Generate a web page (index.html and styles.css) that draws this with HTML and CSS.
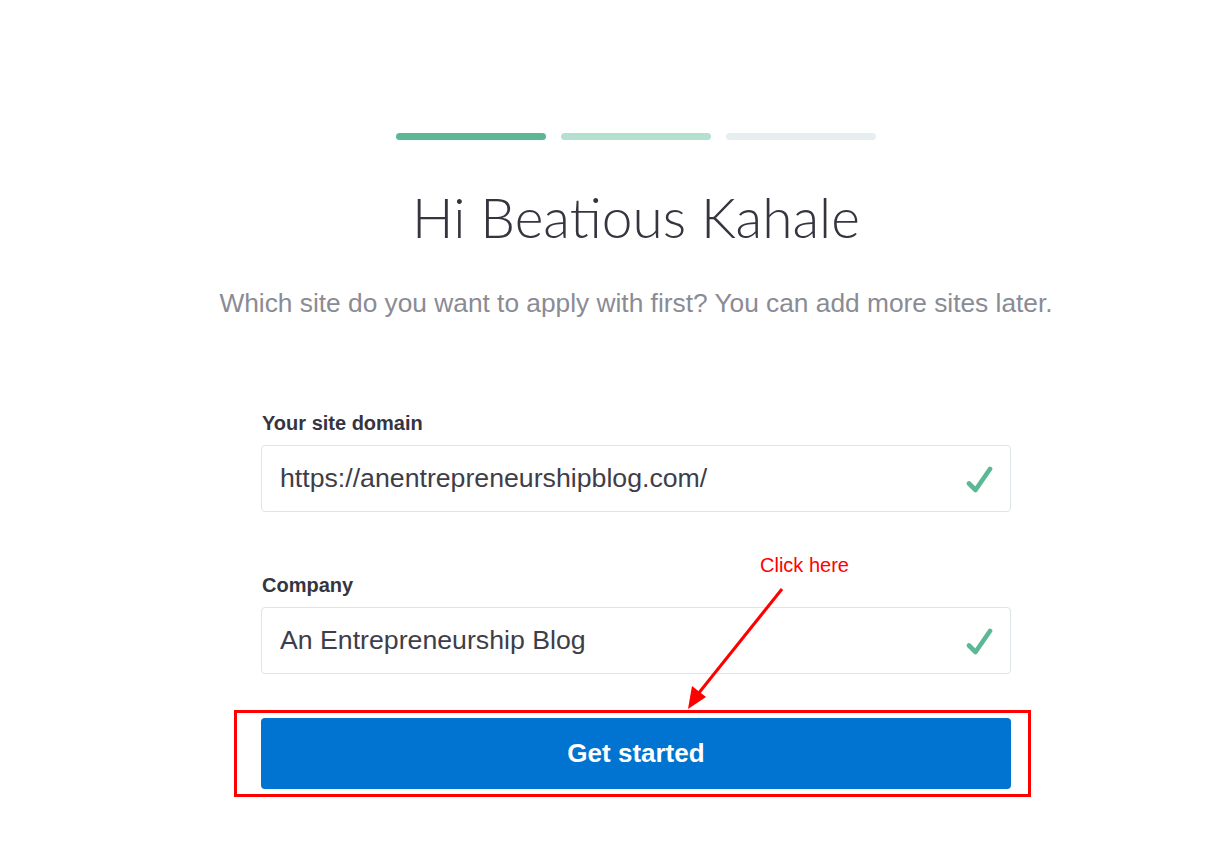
FILE: index.html
```html
<!DOCTYPE html>
<html lang="en">
<head>
<meta charset="utf-8">
<title>Get started</title>
<link rel="stylesheet" href="styles.css">
</head>
<body>
<main class="page">
  <div class="steps">
    <span class="step step-done"></span>
    <span class="step step-current"></span>
    <span class="step step-todo"></span>
  </div>
  <h1 class="title">Hi Beatious Kahale</h1>
  <p class="subtitle">Which site do you want to apply with first? You can add more sites later.</p>

  <form class="form">
    <div class="field">
      <label class="label">Your site domain</label>
      <div class="input">
        <span class="input-value">https://anentrepreneurshipblog.com/</span>
        <svg class="check" viewBox="0 0 28 28" width="28" height="28"><path d="M4 18.5 L10.5 25 L25 4" fill="none" stroke="#5bb894" stroke-width="4.6" stroke-linecap="round" stroke-linejoin="round"/></svg>
      </div>
    </div>
    <div class="field field-second">
      <label class="label">Company</label>
      <div class="input">
        <span class="input-value">An Entrepreneurship Blog</span>
        <svg class="check" viewBox="0 0 28 28" width="28" height="28"><path d="M4 18.5 L10.5 25 L25 4" fill="none" stroke="#5bb894" stroke-width="4.6" stroke-linecap="round" stroke-linejoin="round"/></svg>
      </div>
    </div>
    <div class="cta-wrap">
      <button type="button" class="cta">Get started</button>
      <div class="highlight-box"></div>
    </div>
  </form>

  <div class="annotation">
    <span class="annotation-text">Click here</span>
    <svg class="annotation-arrow" viewBox="0 0 120 130" width="120" height="130">
      <line x1="98" y1="2" x2="14" y2="107" stroke="#ff0000" stroke-width="3"/>
      <polygon points="4,122 8,99 22,110" fill="#ff0000"/>
    </svg>
  </div>
</main>
</body>
</html>
```

FILE: styles.css
```css
* { box-sizing: border-box; }
html, body { margin: 0; padding: 0; background: #ffffff; }
body { font-family: "Liberation Sans", Arial, sans-serif; color: #35353f; min-height: 849px; }

.page {
  position: relative;
  width: 900px;
  margin-left: 186px;
  padding-top: 133px;
  padding-bottom: 52px;
  display: flex;
  flex-direction: column;
  align-items: center;
}

.steps { display: flex; gap: 15px; }
.step { display: block; width: 150px; height: 7px; border-radius: 4px; }
.step-done { background: #5bb894; }
.step-current { background: #b3e0cf; }
.step-todo { background: #e6eef0; }

.title {
  margin: 44px 0 0;
  font-family: Lato, "Open Sans", sans-serif;
  font-weight: 300;
  font-size: 55px;
  line-height: 66px;
  color: #35353f;
}

.subtitle {
  margin: 37px 0 0;
  font-size: 26.3px;
  line-height: 32px;
  color: #8a8b95;
  font-weight: 400;
}

.form { width: 750px; margin-top: 93px; display: flex; flex-direction: column; }

.field { display: flex; flex-direction: column; }
.field-second { margin-top: 62px; }

.label { font-weight: 700; font-size: 20px; line-height: 22px; color: #35353f; margin: 0 0 11px 1px; }

.input {
  height: 67px;
  border: 1px solid #dde5e8;
  border-radius: 4px;
  display: flex;
  align-items: center;
  justify-content: space-between;
  padding: 0 17px 0 18px;
}
.input-value { font-size: 26.7px; color: #3e3e48; }
.check { display: block; }

.cta-wrap { position: relative; margin-top: 44px; }
.cta {
  width: 750px;
  height: 71px;
  border: 0;
  border-radius: 4px;
  background: #0074d0;
  color: #ffffff;
  font-family: "Liberation Sans", Arial, sans-serif;
  font-weight: 700;
  font-size: 26px;
  display: block;
  cursor: pointer;
}
.highlight-box {
  position: absolute;
  left: -27px;
  top: -8px;
  width: 797px;
  height: 87px;
  border: 3px solid #ff0000;
  pointer-events: none;
}

.annotation {
  position: absolute;
  left: 498px;
  top: 553px;
  width: 120px;
}
.annotation-text {
  display: block;
  margin-left: 76px;
  font-size: 20px;
  line-height: 24px;
  color: #ff0000;
  white-space: nowrap;
}
.annotation-arrow { display: block; margin-top: 10px; }
```
